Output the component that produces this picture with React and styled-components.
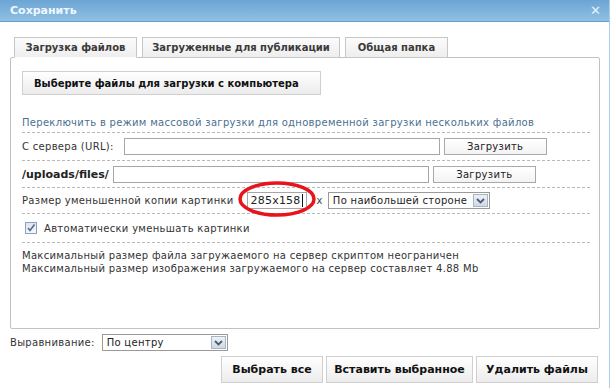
import React from 'react';
import styled, { createGlobalStyle } from 'styled-components';

const GlobalStyle = createGlobalStyle`
  html, body {
    margin: 0;
    padding: 0;
    background: #ffffff;
  }
  body {
    font-family: "DejaVu Sans", Verdana, sans-serif;
    font-size: 10px;
    letter-spacing: 0.3px;
    color: #333;
  }
`;

const Window = styled.div`
  width: 609px;
  height: 388px;
  border-right: 1px solid #a9cde8;
  background: #fff;
  position: relative;
  overflow: hidden;
`;

const TitleBar = styled.div`
  height: 22px;
  box-sizing: border-box;
  padding: 0 10px;
  display: flex;
  align-items: center;
  justify-content: space-between;
  background: linear-gradient(#6ca5d4, #90c0e3);
  border-bottom: 1px solid #6b9fcb;
  color: #eef7ff;
  font-weight: bold;
  font-size: 11px;
  letter-spacing: 0;
`;

const Close = styled.span`
  font-size: 13px;
  color: #e4f1fb;
  margin-right: -2px;
`;

const Body = styled.div`
  padding: 15px 9px 0 10px;
`;

const Tabs = styled.div`
  display: flex;
  gap: 5px;
  padding-left: 4px;
  margin-bottom: -1px;
  position: relative;
  z-index: 1;
`;

const Tab = styled.div`
  width: ${p => p.$w}px;
  height: 21px;
  box-sizing: border-box;
  border: 1px solid #c6c6c6;
  border-bottom: ${p => (p.$active ? '1px solid #fff' : '1px solid #c6c6c6')};
  background: linear-gradient(#fbfbfb, #eeeeee);
  display: flex;
  align-items: center;
  justify-content: center;
  font-weight: bold;
  font-size: 10px;
  letter-spacing: 0;
  color: #3a3a3a;
`;

const Panel = styled.div`
  height: 272px;
  box-sizing: border-box;
  border: 1px solid #c2c2c2;
  border-radius: 2px;
  padding: 13px 9px 0 11px;
  position: relative;
`;

const BigButton = styled.div`
  width: ${p => p.$w}px;
  height: ${p => p.$h || 24}px;
  box-sizing: border-box;
  display: flex;
  align-items: center;
  justify-content: ${p => (p.$left ? 'flex-start' : 'center')};
  padding-left: ${p => (p.$left ? '11px' : '0')};
  border: 1px solid #cfcfcf;
  background: linear-gradient(#ffffff, #ececec);
  font-weight: bold;
  font-size: ${p => p.$fs || 10}px;
  letter-spacing: 0;
  color: #111;
  white-space: nowrap;
`;

const Row = styled.div`
  display: flex;
  align-items: ${p => (p.$bottom ? 'flex-end' : 'center')};
  height: ${p => p.$h}px;
  padding-bottom: ${p => (p.$bottom ? '4px' : '0')};
  box-sizing: ${p => (p.$bottom ? 'border-box' : 'content-box')};
  border-bottom: 1px dashed #b9b9b9;
  gap: ${p => p.$gap}px;
  white-space: nowrap;
`;

const LinkText = styled.span`
  color: #4d6f8f;
`;

const Label = styled.span`
  font-weight: ${p => (p.$bold ? 'bold' : 'normal')};
  font-size: ${p => (p.$bold ? '11px' : '10px')};
  letter-spacing: ${p => (p.$bold ? '0' : '0.3px')};
  color: ${p => (p.$bold ? '#222' : '#333')};
`;

const TextInput = styled.div`
  width: ${p => p.$w}px;
  height: 17px;
  box-sizing: border-box;
  border: 1px solid #a6a6a6;
  background: #fff;
  display: flex;
  align-items: center;
  padding-left: 3px;
  margin-left: ${p => p.$ml || 0}px;
  color: #222;
  font-size: 11px;
  letter-spacing: 0.2px;
`;

const Caret = styled.span`
  display: inline-block;
  width: 1px;
  height: 13px;
  background: #111;
  margin-left: 1px;
`;

const SmallButton = styled.div`
  width: 103px;
  height: 17px;
  box-sizing: border-box;
  border: 1px solid #a9a9a9;
  background: linear-gradient(#ffffff, #f3f3f3);
  display: flex;
  align-items: center;
  justify-content: center;
  color: #222;
`;

const Select = styled.div`
  width: ${p => p.$w}px;
  height: 17px;
  box-sizing: border-box;
  border: 1px solid #9a9a9a;
  background: #fff;
  display: flex;
  align-items: center;
  justify-content: space-between;
  padding: 0 1px 0 4px;
  color: #222;
  white-space: nowrap;
`;

const Arrow = styled.span`
  width: 15px;
  height: 13px;
  box-sizing: border-box;
  border: 1px solid #a8b4c4;
  background: linear-gradient(#eef2f7, #cfd8e3);
  display: flex;
  align-items: center;
  justify-content: center;
`;

const Times = styled.span`
  margin: 0 5px 0 10px;
  color: #444;
`;

const Check = styled.span`
  width: 12px;
  height: 12px;
  box-sizing: border-box;
  border: 1px solid #8ea3bb;
  background: linear-gradient(#dde5ee, #f5f7fa);
  display: flex;
  align-items: center;
  justify-content: center;
  margin-left: 3px;
  margin-right: 3px;
`;

const Info = styled.div`
  padding-top: 6px;
  line-height: 13px;
  color: #333;
`;

const Ellipse = styled.svg`
  position: absolute;
  left: 227px;
  top: 123px;
  overflow: visible;
  pointer-events: none;
`;

const Footer = styled.div`
  display: flex;
  align-items: center;
  gap: 7px;
  height: 27px;
`;

const ButtonBar = styled.div`
  display: flex;
  justify-content: flex-end;
  gap: 3px;
  padding-right: 2px;
`;

const Chevron = () => (
  <svg width="9" height="6" viewBox="0 0 9 6">
    <path d="M1 1l3.5 3.5L8 1" fill="none" stroke="#4b5d73" strokeWidth="1.8" />
  </svg>
);

export default function App() {
  return (
    <>
      <GlobalStyle />
      <Window>
        <TitleBar>
          <span>Сохранить</span>
          <Close>✕</Close>
        </TitleBar>
        <Body>
          <Tabs>
            <Tab $w={123} $active>Загрузка файлов</Tab>
            <Tab $w={198}>Загруженные для публикации</Tab>
            <Tab $w={103}>Общая папка</Tab>
          </Tabs>
          <Panel>
            <BigButton $w={299} $left>Выберите файлы для загрузки с компьютера</BigButton>
            <Row $h={38} $bottom>
              <LinkText>Переключить в режим массовой загрузки для одновременной загрузки нескольких файлов</LinkText>
            </Row>
            <Row $h={27} $gap={4}>
              <Label>С сервера (URL):</Label>
              <TextInput $w={316} $ml={6} />
              <SmallButton>Загрузить</SmallButton>
            </Row>
            <Row $h={26} $gap={4}>
              <Label $bold>/uploads/files/</Label>
              <TextInput $w={316} />
              <SmallButton>Загрузить</SmallButton>
            </Row>
            <Row $h={25} $gap={0}>
              <Label>Размер уменьшенной копии картинки</Label>
              <TextInput $w={60} $ml={13}>
                285x158<Caret />
              </TextInput>
              <Times>x</Times>
              <Select $w={162}>
                По наибольшей стороне
                <Arrow><Chevron /></Arrow>
              </Select>
            </Row>
            <Row $h={28} $gap={4}>
              <Check>
                <svg width="10" height="10" viewBox="0 0 10 10">
                  <path d="M2 5l2 2.5L8.5 1.5" fill="none" stroke="#4e6c95" strokeWidth="1.6" />
                </svg>
              </Check>
              <Label>Автоматически уменьшать картинки</Label>
            </Row>
            <Info>
              Максимальный размер файла загружаемого на сервер скриптом неограничен
              <br />
              Максимальный размер изображения загружаемого на сервер составляет 4.88 Mb
            </Info>
            <Ellipse width="78" height="36" viewBox="0 0 78 36">
              <ellipse cx="39" cy="18" rx="37" ry="16" fill="none" stroke="#e8141c" strokeWidth="3.5" />
            </Ellipse>
          </Panel>
          <Footer>
            <Label>Выравнивание:</Label>
            <Select $w={126}>
              По центру
              <Arrow><Chevron /></Arrow>
            </Select>
          </Footer>
          <ButtonBar>
            <BigButton $w={102} $h={27} $fs={11}>Выбрать все</BigButton>
            <BigButton $w={147} $h={27} $fs={11}>Вставить выбранное</BigButton>
            <BigButton $w={122} $h={27} $fs={11}>Удалить файлы</BigButton>
          </ButtonBar>
        </Body>
      </Window>
    </>
  );
}
